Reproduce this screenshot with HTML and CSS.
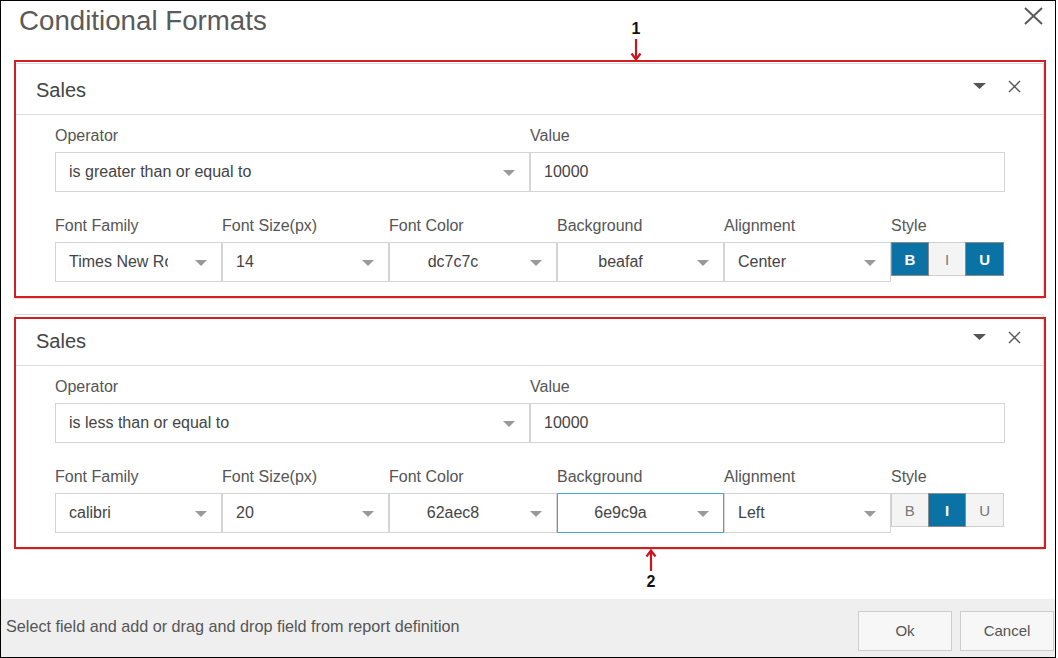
FILE: index.html
```html
<!DOCTYPE html>
<html>
<head>
<meta charset="utf-8">
<link rel="stylesheet" href="styles.css">
</head>
<body>
<div class="dialog">
  <div class="title-bar">
    <span class="title">Conditional Formats</span>
    <svg class="big-x" width="19" height="18" viewBox="0 0 19 18"><path d="M1 1 L18 17 M18 1 L1 17" stroke="#5a5a5a" stroke-width="2" fill="none"/></svg>
  </div>

  <div class="content">
    <div class="panel panel-a">
      <div class="panel-head">
        <span class="panel-title">Sales</span>
        <div class="head-icons">
          <svg width="13" height="6" viewBox="0 0 13 6"><path d="M0 0 H13 L6.5 6 Z" fill="#555"/></svg>
          <svg width="13" height="13" viewBox="0 0 13 13"><path d="M1 1 L12 12 M12 1 L1 12" stroke="#555" stroke-width="1.4" fill="none"/></svg>
        </div>
      </div>
      <div class="panel-body">
        <div class="row row-two">
          <div class="field"><label class="lbl">Operator</label>
            <div class="select"><span class="sel-text">is greater than or equal to</span><span class="caret"></span></div></div>
          <div class="field"><label class="lbl">Value</label>
            <div class="input">10000</div></div>
        </div>
        <div class="row row-six">
          <div class="field"><label class="lbl">Font Family</label>
            <div class="select"><span class="sel-text clip">Times New Roman</span><span class="caret gap"></span></div></div>
          <div class="field"><label class="lbl">Font Size(px)</label>
            <div class="select"><span class="sel-text">14</span><span class="caret"></span></div></div>
          <div class="field"><label class="lbl">Font Color</label>
            <div class="select"><span class="sel-text center">dc7c7c</span><span class="caret gap"></span></div></div>
          <div class="field"><label class="lbl">Background</label>
            <div class="select"><span class="sel-text center">beafaf</span><span class="caret gap"></span></div></div>
          <div class="field"><label class="lbl">Alignment</label>
            <div class="select"><span class="sel-text">Center</span><span class="caret"></span></div></div>
          <div class="field"><label class="lbl">Style</label>
            <div class="style-group">
              <span class="sbtn active">B</span><span class="sbtn">I</span><span class="sbtn active">U</span>
            </div></div>
        </div>
      </div>
    </div>

    <div class="panel panel-b">
      <div class="panel-head">
        <span class="panel-title">Sales</span>
        <div class="head-icons">
          <svg width="13" height="6" viewBox="0 0 13 6"><path d="M0 0 H13 L6.5 6 Z" fill="#555"/></svg>
          <svg width="13" height="13" viewBox="0 0 13 13"><path d="M1 1 L12 12 M12 1 L1 12" stroke="#555" stroke-width="1.4" fill="none"/></svg>
        </div>
      </div>
      <div class="panel-body">
        <div class="row row-two">
          <div class="field"><label class="lbl">Operator</label>
            <div class="select"><span class="sel-text">is less than or equal to</span><span class="caret"></span></div></div>
          <div class="field"><label class="lbl">Value</label>
            <div class="input">10000</div></div>
        </div>
        <div class="row row-six">
          <div class="field"><label class="lbl">Font Family</label>
            <div class="select"><span class="sel-text clip">calibri</span><span class="caret gap"></span></div></div>
          <div class="field"><label class="lbl">Font Size(px)</label>
            <div class="select"><span class="sel-text">20</span><span class="caret"></span></div></div>
          <div class="field"><label class="lbl">Font Color</label>
            <div class="select"><span class="sel-text center">62aec8</span><span class="caret gap"></span></div></div>
          <div class="field"><label class="lbl">Background</label>
            <div class="select focused"><span class="sel-text center">6e9c9a</span><span class="caret gap"></span></div></div>
          <div class="field"><label class="lbl">Alignment</label>
            <div class="select"><span class="sel-text">Left</span><span class="caret"></span></div></div>
          <div class="field"><label class="lbl">Style</label>
            <div class="style-group">
              <span class="sbtn">B</span><span class="sbtn active">I</span><span class="sbtn">U</span>
            </div></div>
        </div>
      </div>
    </div>
  </div>

  <div class="footer">
    <span class="hint">Select field and add or drag and drop field from report definition</span>
    <div class="footer-buttons">
      <button class="btn">Ok</button>
      <button class="btn">Cancel</button>
    </div>
  </div>

  <div class="note note-1">
    <span class="note-num">1</span>
    <svg width="12" height="22" viewBox="0 0 12 22"><path d="M6 0 V20 M1.5 14.5 L6 20.5 L10.5 14.5" stroke="#c8161d" stroke-width="2.2" fill="none"/></svg>
  </div>
  <div class="note note-2">
    <svg width="12" height="22" viewBox="0 0 12 22"><path d="M6 22 V2 M1.5 7.5 L6 1.5 L10.5 7.5" stroke="#c8161d" stroke-width="2.2" fill="none"/></svg>
    <span class="note-num">2</span>
  </div>
</div>
</body>
</html>
```

FILE: styles.css
```css
* { box-sizing: border-box; }
html, body { margin: 0; padding: 0; background: #fff; }
body { font-family: "Liberation Sans", Arial, sans-serif; color: #555; }

.dialog {
  position: relative;
  width: 1056px;
  height: 658px;
  border: 1px solid #000;
  display: flex;
  flex-direction: column;
  background: #fff;
}

.title-bar {
  height: 40px;
  display: flex;
  align-items: center;
  justify-content: space-between;
  padding: 0 12px 0 18px;
}
.title { font-size: 27.7px; color: #5a5a5a; line-height: 40px; }
.big-x { align-self: flex-start; margin-top: 6px; }

.content {
  padding: 22px 11px 0 14px;
  display: flex;
  flex-direction: column;
  gap: 15px;
}

.panel {
  position: relative;
  border: 1px solid #dcdcdc;
  background: #fff;
}
.panel::after {
  content: "";
  position: absolute;
  border: 2px solid #d3201f;
  pointer-events: none;
}
.panel-a::after { top: -4px; left: -2px; right: -3px; bottom: 0px; }
.panel-b::after { top: 2px; left: -2px; right: -3px; bottom: 0px; }

.panel-head {
  height: 50px;
  border-bottom: 1px solid #dcdcdc;
  display: flex;
  align-items: center;
  justify-content: space-between;
  padding: 0 22px 0 20px;
  box-sizing: content-box;
}
.panel-title { font-size: 20px; color: #444; margin-top: 2px; }
.head-icons { display: flex; align-items: center; gap: 22px; margin-top: -6px; }
.head-icons svg { display: block; }

.panel-body { padding: 11px 38px 16px 39px; }

.row { display: grid; }
.row-two { grid-template-columns: 475px 475px; }
.row-six { grid-template-columns: 167px 167px 168px 167px 167px 113px; margin-top: 24px; }

.field { display: flex; flex-direction: column; min-width: 0; }
.lbl { font-size: 16px; line-height: 20px; height: 20px; margin-bottom: 6px; color: #555; }

.select, .input {
  height: 40px;
  border: 1px solid #d4d4d4;
  display: flex;
  align-items: center;
  padding: 0 14px 0 13px;
  font-size: 16px;
  color: #444;
  background: #fff;
  white-space: nowrap;
}
.select.focused { border-color: #45a5dd; }
.sel-text { flex: 1; overflow: hidden; white-space: nowrap; min-width: 0; }
.sel-text.center { text-align: center; }
.caret {
  width: 0; height: 0;
  border-left: 6px solid transparent;
  border-right: 6px solid transparent;
  border-top: 6px solid #999;
  flex: none;
  margin-top: 2px;
}
.caret.gap { margin-left: 27px; }

.style-group { display: flex; height: 34px; }
.sbtn {
  width: 37.7px;
  height: 34px;
  display: flex;
  align-items: center;
  justify-content: center;
  font-size: 15px;
  color: #777;
  background: #f4f4f4;
  border: 1px solid #cfcfcf;
}
.sbtn + .sbtn { margin-left: -1px; width: 38.6px; }
.sbtn.active {
  background: #0b72a6;
  color: #fff;
  font-weight: bold;
  border-color: #8a8a8a;
  position: relative;
}

.footer {
  margin-top: auto;
  height: 58px;
  background: #efefef;
  display: flex;
  align-items: center;
  justify-content: space-between;
  padding: 0 1px 0 5px;
}
.hint { font-size: 16.2px; color: #555; margin-top: -3px; }
.footer-buttons { display: flex; gap: 8px; margin-top: 5px; }
.btn {
  width: 94px;
  height: 40px;
  border: 1px solid #cdcdcd;
  background: #f7f7f7;
  font-family: "Liberation Sans", Arial, sans-serif;
  font-size: 15px;
  color: #555;
  padding: 0;
}

.note {
  position: absolute;
  display: flex;
  flex-direction: column;
  align-items: center;
}
.note svg { display: block; }
.note-num { font-size: 16px; font-weight: bold; color: #111; line-height: 16px; }
.note-1 { left: 629px; top: 20px; gap: 2px; }
.note-2 { left: 644px; top: 548px; gap: 3px; }
```
